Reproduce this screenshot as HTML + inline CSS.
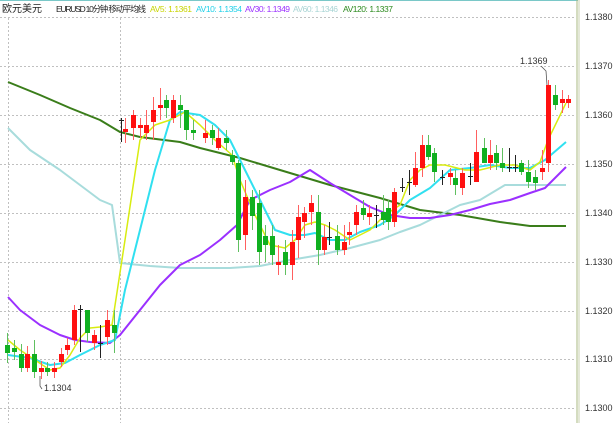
<!DOCTYPE html>
<html><head><meta charset="utf-8"><style>
html,body{margin:0;padding:0;background:#fff;width:615px;height:423px;overflow:hidden}
svg{display:block}
text{font-family:"Liberation Sans","Noto Sans CJK SC",sans-serif}
</style></head><body>
<svg width="615" height="423" xmlns="http://www.w3.org/2000/svg">
<rect width="615" height="423" fill="#fff"/>
<line x1="0" y1="0.5" x2="578" y2="0.5" stroke="#7ac8c8"/>
<line x1="577" y1="0" x2="577" y2="423" stroke="#a8b880"/>
<line x1="579" y1="0" x2="579" y2="423" stroke="#c8d0b0"/>
<g stroke="#c0c0c0" stroke-dasharray="2,2" stroke-width="1">
<line x1="0" y1="17.5" x2="576" y2="17.5"/>
<line x1="0" y1="66.5" x2="576" y2="66.5"/>
<line x1="0" y1="115.5" x2="576" y2="115.5"/>
<line x1="0" y1="164.5" x2="576" y2="164.5"/>
<line x1="0" y1="213.5" x2="576" y2="213.5"/>
<line x1="0" y1="262.5" x2="576" y2="262.5"/>
<line x1="0" y1="311.5" x2="576" y2="311.5"/>
<line x1="0" y1="359.5" x2="576" y2="359.5"/>
<line x1="0" y1="408.5" x2="576" y2="408.5"/>
<line x1="8.5" y1="18" x2="8.5" y2="423"/>
<line x1="120.5" y1="18" x2="120.5" y2="423"/>
</g>
<g font-size="9" fill="#333">
<text x="585" y="20">1.1380</text>
<text x="585" y="69">1.1370</text>
<text x="585" y="118">1.1360</text>
<text x="585" y="167">1.1350</text>
<text x="585" y="216">1.1340</text>
<text x="585" y="265">1.1330</text>
<text x="585" y="314">1.1320</text>
<text x="585" y="362">1.1310</text>
<text x="585" y="411">1.1300</text>
</g>
<g font-size="8.5">
<text x="2" y="12" fill="#222" font-size="10" textLength="40">欧元美元</text>
<text x="56" y="12" fill="#222" textLength="90">EURUSD 10分钟 移动平均线</text>
<text x="150" y="12" fill="#c8d400" textLength="42">AV5: 1.1361</text>
<text x="196" y="12" fill="#20d0e8" textLength="46">AV10: 1.1354</text>
<text x="245" y="12" fill="#9b30ff" textLength="45">AV30: 1.1349</text>
<text x="293" y="12" fill="#a8d4d4" textLength="45">AV60: 1.1346</text>
<text x="343" y="12" fill="#2e8b20" textLength="50">AV120: 1.1337</text>
</g>
<g fill="none" stroke-width="2" stroke-linejoin="round">
<polyline stroke="#3a7d1a" points="8,82 40,95 70,108 100,120 120,132 140,137 180,142 200,148 240,158 280,170 330,185 380,198 420,210 460,215 500,222 530,226 566,226"/>
<polyline stroke="#a8dcdc" points="8,128 30,150 60,170 80,185 100,200 112,205 120,263 150,266 180,268 230,268 260,266 290,260 320,255 350,248 380,240 400,232 420,225 440,215 460,205 480,200 505,185 520,185 566,185"/>
<polyline stroke="#9b30ff" points="8,297 20,310 40,325 60,335 75,340 90,342 110,343 120,335 140,310 160,285 180,265 200,255 220,240 237,225 250,200 270,190 290,182 310,170 330,183 350,195 370,207 390,215 410,218 430,218 450,215 470,210 490,204 510,200 530,193 545,188 566,167"/>
<polyline stroke="#30e0f0" points="8,355 30,358 50,365 65,363 80,355 100,345 115,340 125,290 140,230 155,170 170,120 180,112 200,115 215,125 230,140 245,170 260,200 275,230 290,235 305,235 315,233 330,240 345,240 360,232 380,225 395,215 410,200 430,188 450,170 470,168 490,165 510,168 530,168 545,160 566,142"/>
<polyline stroke="#d8ec10" stroke-width="1.5" points="8,340 20,350 35,360 50,370 60,368 70,355 80,338 90,328 100,327 112,325 125,240 140,140 155,125 170,120 185,112 200,125 215,140 232,155 240,180 255,215 270,245 285,248 295,240 305,225 315,222 325,225 335,230 350,240 370,230 385,215 400,205 410,180 420,170 430,165 445,165 465,170 480,170 500,165 515,165 530,170 540,162 548,140 566,103"/>
</g>
<!-- green candles -->
<path fill="none" stroke="#60c060" d="M7.5 333V363M14.5 340V360M21.5 344V372M34.5 340V378M47.5 362V376M87.5 310V342M114.5 310V353M166.5 95V118M180.5 95V128M186.5 110V140M193.5 120V140M212.5 125V145M226.5 130V150M232.5 150V165M238.5 160V252M252.5 190V230M259.5 190V265M265.5 225V262M272.5 225V265M285.5 240V275M318.5 195V265M337.5 225V255M363.5 200V220M383.5 195V225M388.5 200V230M428.5 135V160M434.5 148V182M455.5 170V195M484.5 138V163M496.5 145V170M502.5 148V172M521.5 160V175M528.5 160V188M535.5 170V190M555.5 85V110"/>
<g fill="#10b020">
<rect x="5" y="345" width="5" height="8"/><rect x="12" y="348" width="5" height="4"/><rect x="19" y="354" width="5" height="14"/><rect x="32" y="354" width="5" height="18"/><rect x="45" y="368" width="5" height="4"/><rect x="85" y="310" width="5" height="23"/><rect x="112" y="325" width="5" height="8"/><rect x="164" y="100" width="5" height="8"/><rect x="178" y="105" width="5" height="5"/><rect x="184" y="110" width="5" height="20"/><rect x="191" y="130" width="5" height="3"/><rect x="210" y="130" width="5" height="8"/><rect x="224" y="138" width="5" height="5"/><rect x="230" y="155" width="5" height="7"/><rect x="236" y="163" width="5" height="77"/><rect x="250" y="197" width="5" height="19"/><rect x="257" y="203" width="5" height="49"/><rect x="263" y="236" width="5" height="9"/><rect x="270" y="236" width="5" height="19"/><rect x="283" y="252" width="5" height="13"/><rect x="316" y="212" width="5" height="38"/><rect x="335" y="236" width="5" height="14"/><rect x="361" y="208" width="5" height="7"/><rect x="381" y="212" width="5" height="8"/><rect x="386" y="208" width="5" height="14"/><rect x="426" y="145" width="5" height="12"/><rect x="432" y="153" width="5" height="19"/><rect x="453" y="178" width="5" height="7"/><rect x="482" y="148" width="5" height="15"/><rect x="494" y="153" width="5" height="10"/><rect x="500" y="163" width="5" height="5"/><rect x="519" y="163" width="5" height="9"/><rect x="526" y="172" width="5" height="10"/><rect x="533" y="177" width="5" height="6"/><rect x="553" y="95" width="5" height="10"/>
</g>
<!-- red candles -->
<path fill="none" stroke="#ff6060" d="M27.5 346V372M41.5 361V379M54.5 362V378M61.5 348V367M67.5 338V355M74.5 305V345M94.5 330V350M107.5 310V345M125.5 118V143M133.5 110V140M140.5 118V138M146.5 110V140M153.5 97V140M160.5 88V120M173.5 95V123M205.5 120V143M218.5 128V150M245.5 180V250M278.5 245V275M292.5 230V280M298.5 205V258M304.5 207V238M311.5 195V225M324.5 225V255M344.5 225V255M349.5 222V245M356.5 205V235M369.5 205V225M394.5 188V227M415.5 152V187M422.5 135V177M450.5 168V185M462.5 168V195M476.5 130V182M490.5 140V170M542.5 150V180M548.5 80V172M562.5 90V113M568.5 95V108"/>
<g fill="#ff1010">
<rect x="25" y="354" width="5" height="14"/><rect x="39" y="368" width="5" height="4"/><rect x="52" y="368" width="5" height="4"/><rect x="59" y="354" width="5" height="8"/><rect x="65" y="345" width="5" height="5"/><rect x="72" y="310" width="5" height="30"/><rect x="92" y="335" width="5" height="8"/><rect x="105" y="320" width="5" height="17"/><rect x="123" y="129" width="5" height="3"/><rect x="131" y="115" width="5" height="13"/><rect x="138" y="125" width="5" height="3"/><rect x="144" y="125" width="5" height="8"/><rect x="151" y="110" width="5" height="12"/><rect x="158" y="105" width="5" height="3"/><rect x="171" y="100" width="5" height="18"/><rect x="203" y="133" width="5" height="5"/><rect x="216" y="138" width="5" height="10"/><rect x="243" y="197" width="5" height="38"/><rect x="276" y="262" width="5" height="3"/><rect x="290" y="242" width="5" height="23"/><rect x="296" y="217" width="5" height="23"/><rect x="302" y="213" width="5" height="9"/><rect x="309" y="203" width="5" height="9"/><rect x="322" y="237" width="5" height="13"/><rect x="342" y="242" width="5" height="8"/><rect x="347" y="232" width="5" height="3"/><rect x="354" y="212" width="5" height="13"/><rect x="367" y="213" width="5" height="4"/><rect x="392" y="192" width="5" height="30"/><rect x="413" y="168" width="5" height="17"/><rect x="420" y="145" width="5" height="23"/><rect x="448" y="173" width="5" height="4"/><rect x="460" y="173" width="5" height="15"/><rect x="474" y="152" width="5" height="30"/><rect x="488" y="155" width="5" height="8"/><rect x="540" y="168" width="5" height="4"/><rect x="546" y="85" width="5" height="78"/><rect x="560" y="99" width="5" height="4"/><rect x="566" y="99" width="5" height="4"/>
</g>
<!-- doji -->
<path fill="none" stroke="#222" d="M80.5 305V352M78 309.5H83M100.5 325V358M98 343.5H103M121.5 118V142M119 120.5H124M329.5 222V245M327 237.5H332M376.5 205V228M374 215.5H379M402.5 178V192M400 187.5H405M409.5 170V195M407 182.5H412M442.5 170V185M440 177.5H445M470.5 163V185M468 176.5H473M509.5 148V172M507 167.5H512M515.5 155V172M513 167.5H518"/>
<g font-size="9" fill="#333">
<text x="520" y="64">1.1369</text>
<text x="44" y="391">1.1304</text>
</g>
<polyline points="541,66 546,71 547,85" fill="none" stroke="#555" stroke-width="0.8"/>
<polyline points="42,389 40,386 40,376" fill="none" stroke="#555" stroke-width="0.8"/>
</svg>
</body></html>
